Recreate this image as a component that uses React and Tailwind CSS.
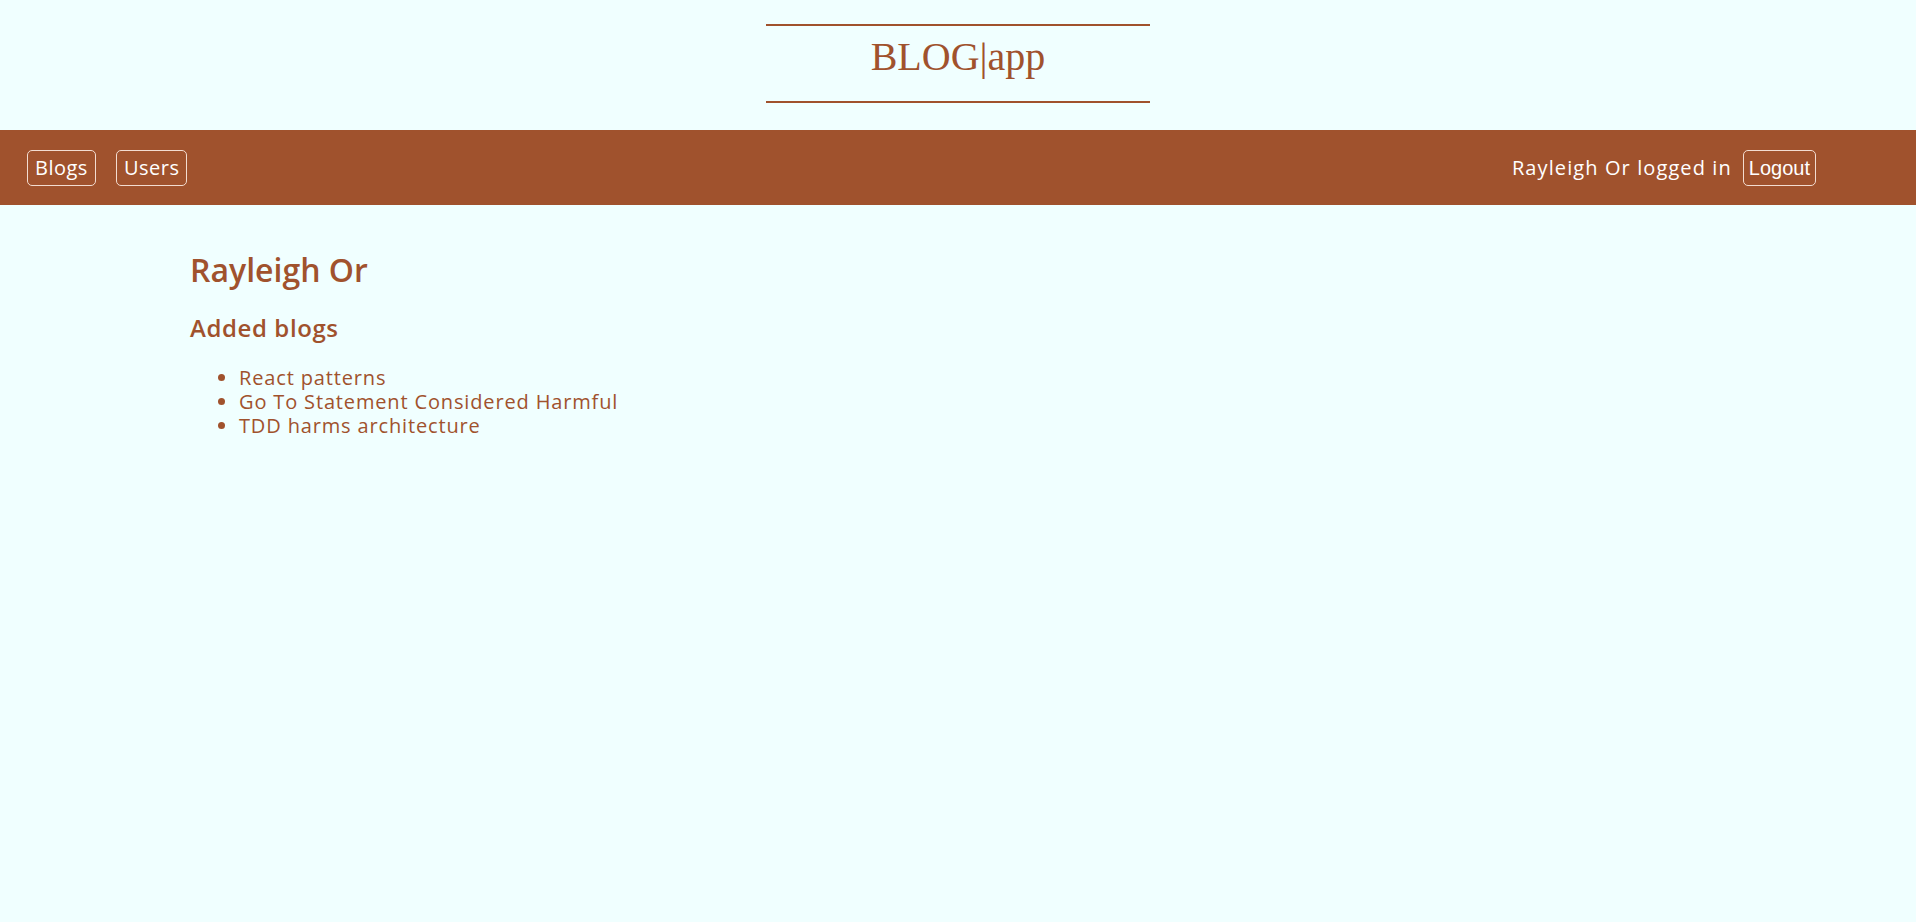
const blogs = ['React patterns', 'Go To Statement Considered Harmful', 'TDD harms architecture']

const sans = { fontFamily: '"Open Sans", "DejaVu Sans", sans-serif' }

function NavButton({ children }) {
  return (
    <button className="h-[36px] px-[7px] border border-[#f3dcd0] rounded-[5px] text-white text-[20px] leading-none tracking-[0.5px]">
      {children}
    </button>
  )
}

export default function App() {
  return (
    <div className="min-h-screen bg-[#f0ffff] text-[#a0522d]" style={sans}>
      {/* Header */}
      <div className="pt-[24px]">
        <div className="w-[384px] mx-auto border-t-2 border-b-2 border-[#a0522d] pt-[8px] pb-[21px] text-center">
          <h1 className="text-[40px] leading-[46px] font-['Liberation_Serif',serif]">BLOG|app</h1>
        </div>
      </div>

      {/* Nav */}
      <nav className="mt-[27px] h-[75px] bg-[#a0522d] flex items-center justify-between pl-[27px] pr-[100px]">
        <div className="flex items-center gap-[20px]">
          <NavButton>Blogs</NavButton>
          <NavButton>Users</NavButton>
        </div>
        <div className="flex items-center gap-[11px]">
          <span className="text-white text-[20px] tracking-[1.1px]">Rayleigh Or logged in</span>
          <button className="h-[36px] px-[5px] border border-[#f3dcd0] rounded-[5px] text-white text-[20px] leading-none font-['Liberation_Sans',Arial,sans-serif]">
            Logout
          </button>
        </div>
      </nav>

      {/* Main */}
      <main className="pl-[190px] pt-[45px]">
        <h2 className="text-[32px] font-semibold leading-[40px]">Rayleigh Or</h2>
        <h3 className="mt-[23px] text-[24px] font-semibold leading-[30px] tracking-[0.6px]">Added blogs</h3>
        <ul className="mt-[23px] list-disc pl-[49px] text-[20px] leading-[24px] tracking-[0.85px]">
          {blogs.map(b => (
            <li key={b}>{b}</li>
          ))}
        </ul>
      </main>
    </div>
  )
}
